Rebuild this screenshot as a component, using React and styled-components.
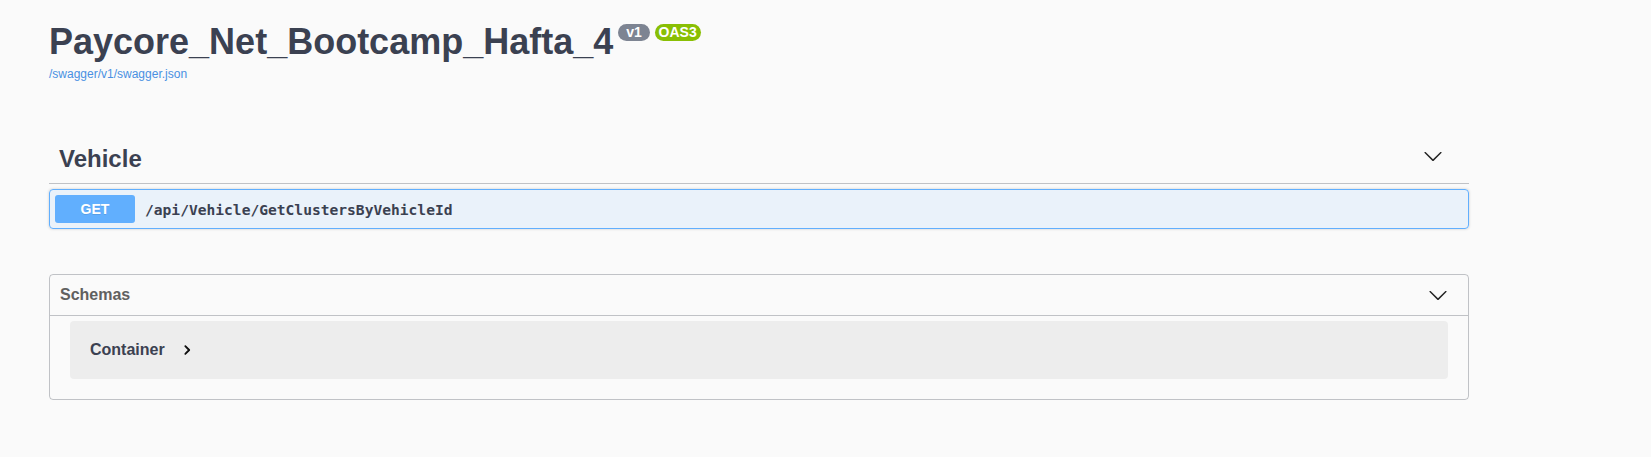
import styled, { createGlobalStyle } from 'styled-components';

const GlobalStyle = createGlobalStyle`
  body {
    margin: 0;
    background: #fafafa;
    font-family: 'Liberation Sans', Arial, sans-serif;
  }
`;

function ChevronDown({ size = 20 }) {
  return (
    <svg width={size} height={size} viewBox="0 0 20 20" aria-hidden="true">
      <path
        fill="#222"
        d="M17.418 6.109c.272-.268.709-.268.979 0s.271.701 0 .969l-7.908 7.83c-.27.268-.707.268-.979 0l-7.908-7.83c-.27-.268-.27-.701 0-.969.271-.268.709-.268.979 0L10 13.25l7.418-7.141z"
      />
    </svg>
  );
}

function ChevronRight() {
  return (
    <svg width="10" height="10" viewBox="0 0 20 20" aria-hidden="true">
      <path
        fill="#111"
        stroke="#111"
        strokeWidth="2.2"
        strokeLinejoin="round"
        d="M13.25 10L6.109 2.58c-.268-.27-.268-.707 0-.979.268-.27.701-.27.969 0l7.83 7.908c.268.271.268.709 0 .979l-7.83 7.908c-.268.271-.701.27-.969 0-.268-.269-.268-.707 0-.979L13.25 10z"
      />
    </svg>
  );
}

function App() {
  return (
    <>
      <GlobalStyle />
      <Wrapper>
        <Info>
          <Title>
            Paycore_Net_Bootcamp_Hafta_4
            <Badge $bg="#7d8492">{' v1 '}</Badge>
            <Badge $bg="#89bf04">OAS3</Badge>
          </Title>
          <SpecLink href="#">/swagger/v1/swagger.json</SpecLink>
        </Info>

        <TagSection>
          <TagHeader>
            <TagName>Vehicle</TagName>
            <ExpandButton $offset={2}>
              <ChevronDown />
            </ExpandButton>
          </TagHeader>
          <OpBlock>
            <Method>GET</Method>
            <OpPath>/api/Vehicle/GetClustersByVehicleId</OpPath>
          </OpBlock>
        </TagSection>

        <Models>
          <ModelsHeader>
            <ModelsTitle>Schemas</ModelsTitle>
            <ExpandButton $offset={0}>
              <ChevronDown />
            </ExpandButton>
          </ModelsHeader>
          <ModelContainer>
            <ModelName>Container</ModelName>
            <ModelToggle>
              <ChevronRight />
            </ModelToggle>
          </ModelContainer>
        </Models>
      </Wrapper>
    </>
  );
}
export default App;

const Wrapper = styled.div`
  width: 1420px;
  margin-left: 49px;
  padding-top: 21px;
`;

const Info = styled.hgroup`
  margin: 0;
`;

const Title = styled.h2`
  display: flex;
  align-items: flex-start;
  margin: 0;
  font-size: 36px;
  line-height: 42px;
  font-weight: 700;
  color: #3b4151;
`;

const Badge = styled.small`
  display: inline-block;
  margin: 3px 0 0 5px;
  padding: 0 4px;
  height: 17px;
  border-radius: 57px;
  background: ${p => p.$bg};
  color: #ffffff;
  font-size: 14px;
  line-height: 17px;
  font-weight: 700;
  white-space: pre;
`;

const SpecLink = styled.a`
  display: block;
  margin-top: 4px;
  font-size: 12px;
  line-height: 14px;
  color: #4990e2;
  text-decoration: none;
`;

const TagSection = styled.section`
  margin-top: 53px;
`;

const TagHeader = styled.div`
  display: flex;
  align-items: center;
  justify-content: space-between;
  padding: 10px 26px 10px 10px;
  margin-bottom: 5px;
  border-bottom: 1px solid rgba(59, 65, 81, 0.3);
`;

const TagName = styled.h3`
  margin: 0;
  font-size: 24px;
  line-height: 29px;
  font-weight: 700;
  color: #3b4151;
`;

const ExpandButton = styled.span`
  display: flex;
  align-self: ${p => (p.$offset ? 'flex-start' : 'center')};
  margin-top: ${p => p.$offset}px;
`;

const OpBlock = styled.div`
  display: flex;
  align-items: center;
  padding: 5px;
  border: 1px solid #61affe;
  border-radius: 4px;
  background: rgba(97, 175, 254, 0.1);
  box-shadow: 0 0 3px rgba(0, 0, 0, 0.19);
`;

const Method = styled.span`
  min-width: 80px;
  padding: 6px 0;
  border-radius: 3px;
  background: #61affe;
  color: #ffffff;
  font-size: 14px;
  line-height: 16px;
  font-weight: 700;
  text-align: center;
  text-shadow: 0 1px 0 rgba(0, 0, 0, 0.1);
`;

const OpPath = styled.span`
  padding: 0 10px;
  font-family: 'DejaVu Sans Mono', monospace;
  font-size: 14.6px;
  font-weight: 700;
  color: #3b4151;
`;

const Models = styled.section`
  margin-top: 45px;
  padding-bottom: 20px;
  border: 1px solid rgba(59, 65, 81, 0.3);
  border-radius: 4px;
`;

const ModelsHeader = styled.div`
  display: flex;
  align-items: center;
  justify-content: space-between;
  padding: 10px 20px 10px 10px;
  border-bottom: 1px solid rgba(59, 65, 81, 0.3);
`;

const ModelsTitle = styled.h4`
  margin: 0;
  font-size: 16px;
  line-height: 20px;
  font-weight: 700;
  color: #606060;
`;

const ModelContainer = styled.div`
  display: flex;
  align-items: center;
  height: 58px;
  margin: 5px 20px 0;
  padding: 0 20px;
  border-radius: 4px;
  background: rgba(0, 0, 0, 0.05);
`;

const ModelName = styled.span`
  font-size: 16px;
  line-height: 18px;
  font-weight: 700;
  color: #3b4151;
`;

const ModelToggle = styled.span`
  display: flex;
  margin-left: 17px;
`;
